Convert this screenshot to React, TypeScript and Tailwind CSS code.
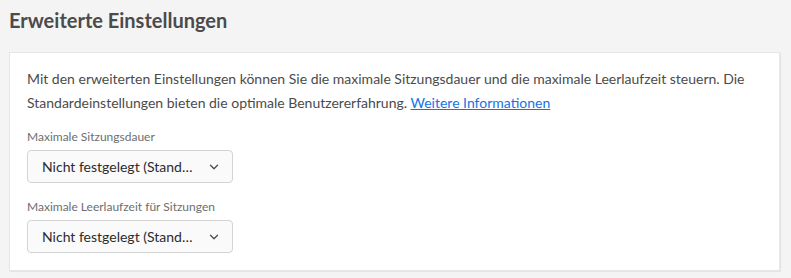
import { ChevronDown } from "lucide-react";

const fields: { label: string; value: string }[] = [
  { label: "Maximale Sitzungsdauer", value: "Nicht festgelegt (Stand…" },
  { label: "Maximale Leerlaufzeit für Sitzungen", value: "Nicht festgelegt (Stand…" },
];

export default function App() {
  return (
    <div className="min-h-[278px] bg-[#f4f4f4] px-[9px] pt-[6px] pb-[7px] font-['Lato',sans-serif] text-[#4b4b4b]">
      <h1 className="text-[20px] leading-[28px] font-bold text-[#4b4b4b]">Erweiterte Einstellungen</h1>
      <section className="mt-[18px] mr-[2px] border border-[#e6e6e6] bg-white px-[17px] pt-[14px] pb-[17px] shadow-[1px_1px_1px_rgba(0,0,0,0.06)]">
        <p className="text-[14px] leading-[24px] text-[#4b4b4b]">
          Mit den erweiterten Einstellungen können Sie die maximale Sitzungsdauer und die maximale Leerlaufzeit steuern. Die
          Standardeinstellungen bieten die optimale Benutzererfahrung.{" "}
          <a href="#" className="text-[#1473e6] underline">
            Weitere Informationen
          </a>
        </p>
        <div className="mt-[14px] flex flex-col gap-[16px]">
          {fields.map((f) => (
            <div key={f.label}>
              <label className="block text-[12px] leading-[16px] text-[#6e6e6e]">{f.label}</label>
              <button className="mt-[5px] flex h-[33px] w-[206px] items-center justify-between rounded-[4px] border border-[#d3d3d3] bg-[#fafafa] pr-[11px] pl-[14px] text-[14px] text-[#2c2c2c]">
                <span>{f.value}</span>
                <ChevronDown size={14} strokeWidth={2.25} className="text-[#4b4b4b]" />
              </button>
            </div>
          ))}
        </div>
      </section>
    </div>
  );
}
